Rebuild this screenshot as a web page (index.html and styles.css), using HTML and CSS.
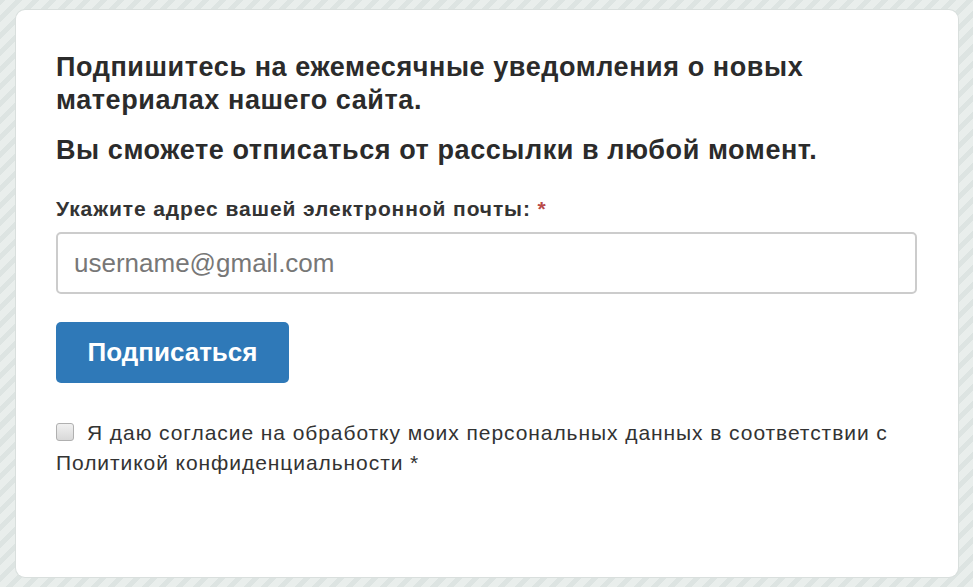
FILE: index.html
```html
<!DOCTYPE html>
<html lang="ru">
<head>
<meta charset="utf-8">
<link rel="stylesheet" href="styles.css">
</head>
<body>
<div class="page">
  <form class="card">
    <p class="lead">Подпишитесь на ежемесячные уведомления о новых материалах нашего сайта.</p>
    <p class="lead second">Вы сможете отписаться от рассылки в любой момент.</p>
    <label class="label" for="email">Укажите адрес вашей электронной почты: <span class="req">*</span></label>
    <input class="input" id="email" type="text" placeholder="username@gmail.com">
    <button class="btn" type="button">Подписаться</button>
    <label class="consent"><span class="box"></span>Я даю согласие на обработку моих персональных данных в соответствии с Политикой конфиденциальности *</label>
  </form>
</div>
</body>
</html>
```
FILE: styles.css
```css
html, body {
  margin: 0;
  height: 100%;
}
body {
  font-family: "Liberation Sans", Arial, sans-serif;
  color: #333;
  background: repeating-linear-gradient(-45deg, #e9eeec 0 7px, #dde4e2 7px 12px);
}
.page {
  padding: 10px 15px 10px 16px;
  height: 100%;
  box-sizing: border-box;
}
.card {
  background: #fff;
  border-radius: 9px;
  box-shadow: 0 0 0 1px #d9dfdd;
  height: 100%;
  box-sizing: border-box;
  padding: 41px 40px;
  display: flex;
  flex-direction: column;
  align-items: flex-start;
}
.lead {
  margin: 0;
  font-size: 27px;
  font-weight: bold;
  letter-spacing: 0.58px;
  line-height: 33px;
  color: #2b2b2b;
}
.second {
  margin-top: 17px;
}
.label {
  margin-top: 29px;
  font-size: 21px;
  font-weight: bold;
  letter-spacing: 0.9px;
  line-height: 26px;
  color: #333;
}
.req {
  color: #b94a48;
}
.input {
  margin-top: 10px;
  width: 861px;
  height: 62px;
  box-sizing: border-box;
  border: 2px solid #ccc;
  border-radius: 5px;
  padding: 0 16px;
  font-family: inherit;
  font-size: 26px;
  color: #555;
  background: #fff;
  outline: none;
}
.input::placeholder {
  color: #777;
}
.btn {
  margin-top: 28px;
  width: 233px;
  height: 61px;
  border: 0;
  border-radius: 5px;
  background: #2f79b8;
  color: #fff;
  font-family: inherit;
  font-size: 26px;
  font-weight: bold;
  padding: 0;
}
.consent {
  margin-top: 35px;
  font-size: 21px;
  letter-spacing: 0.93px;
  line-height: 30px;
  color: #333;
}
.box {
  display: inline-block;
  width: 18px;
  height: 18px;
  box-sizing: border-box;
  border: 1px solid #b0b0b0;
  border-radius: 3px;
  background: linear-gradient(#f0f0f0, #d8d8d8);
  vertical-align: -1px;
  margin-right: 13px;
}
```
